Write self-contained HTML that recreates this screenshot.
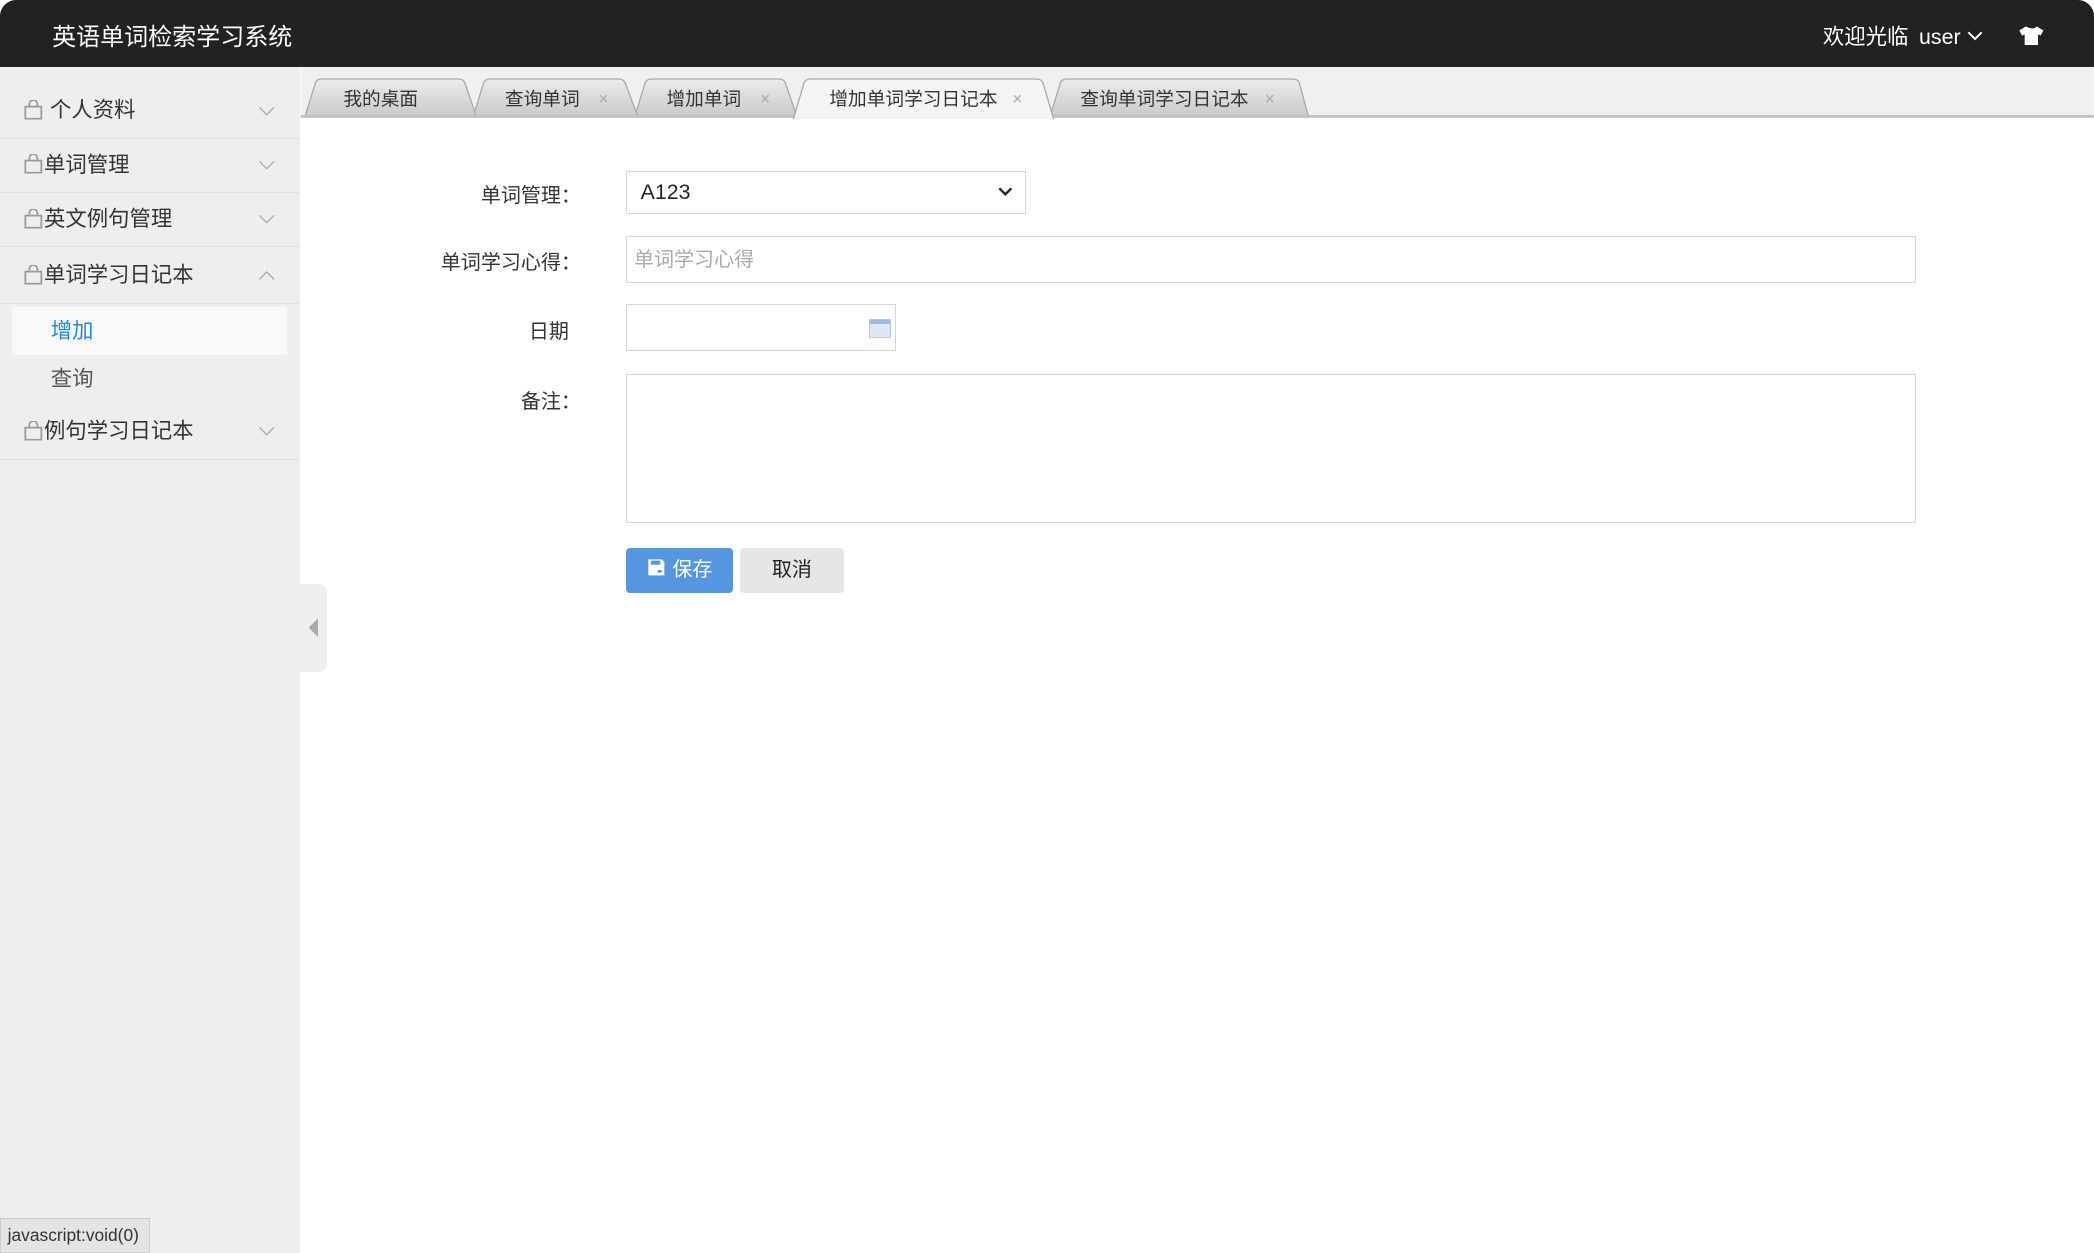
<!DOCTYPE html>
<html><head><meta charset="utf-8"><style>
html{zoom:1.33546}
body{margin:0;width:1568px;height:938px;overflow:hidden;background:#fff;font-family:"Liberation Sans","Noto Sans CJK SC",sans-serif;position:relative;color:#333}
.hd{position:absolute;left:0;top:0;width:1568px;height:50px;background:#222;border-radius:12px 12px 0 0}
.logo{position:absolute;left:39px;top:13px;color:#fff;font-size:18px}
.wel{position:absolute;left:1365px;top:15px;color:#fff;font-size:16px}
.wel b{font-weight:normal;margin-left:8px}
.side{position:absolute;left:0;top:50px;width:225px;height:888px;background:#eee;padding-top:13px;box-sizing:border-box}
.mi{height:40px;border-bottom:1px solid #e2e2e2;position:relative;font-size:16px;line-height:40px;padding-left:18px;color:#333}
.mi svg.l{vertical-align:-2px;margin-right:1px}
.mi .ar{position:absolute;right:19px;top:50%;margin-top:-4px}
.sub{height:36px;line-height:36px;font-size:16px;padding-left:38px}
.tabs{position:absolute;left:0;top:50px;width:1568px;height:40px}
.tt{font-size:14px;fill:#333;font-family:"Liberation Sans","Noto Sans CJK SC",sans-serif}
.tx{font-size:13px;fill:#aaa}
.lbl{position:absolute;width:200px;left:235px;text-align:right;font-size:15px;color:#333}
.box{position:absolute;border:1px solid #d6d6d6;box-sizing:border-box;background:#fff}
.btn{position:absolute;top:410px;height:34px;border-radius:3px;font-size:15px;line-height:34px;text-align:center}
</style></head><body>
<div class="hd"><div class="logo">英语单词检索学习系统</div>
<div class="wel">欢迎光临<b>user</b> <svg width="12" height="8" viewBox="0 0 12 8" style="vertical-align:2px"><path d="M1 1l5 5 5-5" stroke="#fff" stroke-width="1.5" fill="none"/></svg>
<svg width="20" height="16" viewBox="0 0 20 16" style="margin-left:22px;vertical-align:-2px"><path d="M6 1L1 4l2 4 2-1v8h10V7l2 1 2-4-5-3c-1 2-5 2-8 0z" fill="#fff"/></svg></div></div>
<div class="side">
<div class="mi"><svg class="l" width="14" height="15" viewBox="0 0 14 15"><path d="M1 5h12v9H1zM4 5V3a3 3 0 0 1 6 0v2" stroke="#999" fill="none" stroke-width="1.3"/></svg> 个人资料<svg class="ar" width="13" height="8"><path d="M1 1l5.5 5.5L12 1" stroke="#aaa" fill="none"/></svg></div>
<div class="mi"><svg class="l" width="14" height="15" viewBox="0 0 14 15"><path d="M1 5h12v9H1zM4 5V3a3 3 0 0 1 6 0v2" stroke="#999" fill="none" stroke-width="1.3"/></svg>单词管理<svg class="ar" width="13" height="8"><path d="M1 1l5.5 5.5L12 1" stroke="#aaa" fill="none"/></svg></div>
<div class="mi"><svg class="l" width="14" height="15" viewBox="0 0 14 15"><path d="M1 5h12v9H1zM4 5V3a3 3 0 0 1 6 0v2" stroke="#999" fill="none" stroke-width="1.3"/></svg>英文例句管理<svg class="ar" width="13" height="8"><path d="M1 1l5.5 5.5L12 1" stroke="#aaa" fill="none"/></svg></div>
<div class="mi" style="height:42px;line-height:42px"><svg class="l" width="14" height="15" viewBox="0 0 14 15"><path d="M1 5h12v9H1zM4 5V3a3 3 0 0 1 6 0v2" stroke="#999" fill="none" stroke-width="1.3"/></svg>单词学习日记本<svg class="ar" width="13" height="8"><path d="M1 7l5.5-5.5L12 7" stroke="#aaa" fill="none"/></svg></div>
<div style="height:2px"></div>
<div class="sub" style="background:#f9f9f9;margin:0 10px 0 9px;padding-left:29px;color:#1e88e5">增加</div>
<div class="sub" style="color:#555">查询</div>
<div class="mi" style="height:42px;line-height:42px"><svg class="l" width="14" height="15" viewBox="0 0 14 15"><path d="M1 5h12v9H1zM4 5V3a3 3 0 0 1 6 0v2" stroke="#999" fill="none" stroke-width="1.3"/></svg>例句学习日记本<svg class="ar" width="13" height="8"><path d="M1 1l5.5 5.5L12 1" stroke="#aaa" fill="none"/></svg></div>
</div>
<div style="position:absolute;left:0;top:912px;width:112px;height:26px;background:#e4e4e4;border:1px solid #ccc;box-sizing:border-box;font-size:13px;line-height:24px;padding-left:5px">javascript:void(0)</div>
<div style="position:absolute;left:225px;top:437px;width:20px;height:66px;background:#efefef;border-radius:0 6px 6px 0"></div>
<svg style="position:absolute;left:229px;top:462px" width="10" height="16"><path d="M9 1L2 8l7 7z" fill="#aaa"/></svg>
<svg class="tabs" width="1568" height="40" viewBox="0 50 1568 40">
<defs><linearGradient id="g" x1="0" y1="0" x2="0" y2="1"><stop offset="0" stop-color="#ececec"/><stop offset="1" stop-color="#c8c8c8"/></linearGradient></defs>
<rect x="225" y="50" width="1343" height="38" fill="#f0f0f0"/>
<path d="M786 88L794 62Q795 59 799 59H968Q972 59 973 62L980 88" fill="url(#g)" stroke="#aaa"/>
<path d="M475 88L483 62Q484 59 488 59H583Q587 59 588 62L597 88" fill="url(#g)" stroke="#aaa"/>
<path d="M354 88L362 62Q363 59 367 59H463Q467 59 468 62L478 88" fill="url(#g)" stroke="#aaa"/>
<path d="M228 88L236 62Q237 59 241 59H343Q347 59 348 62L357 88" fill="url(#g)" stroke="#aaa"/>
<rect x="225" y="86" width="1343" height="2" fill="#c0c0c0"/>
<path d="M594 89L602 62Q603 59 607 59H776Q780 59 781 62L789 89" fill="#f4f4f4" stroke="#aaa"/>
<text class="tt" x="257" y="79">我的桌面</text>
<text class="tt" x="378" y="79">查询单词</text><text class="tx" x="448" y="78">×</text>
<text class="tt" x="499" y="79">增加单词</text><text class="tx" x="569" y="78">×</text>
<text class="tt" x="621" y="79">增加单词学习日记本</text><text class="tx" x="758" y="78">×</text>
<text class="tt" x="809" y="79">查询单词学习日记本</text><text class="tx" x="947" y="78">×</text>
</svg>
<div class="lbl" style="top:134px">单词管理：</div>
<div class="box" style="left:469px;top:128px;width:299px;height:32px;font-size:16px;line-height:30px;padding-left:10px;color:#222">A123<svg style="position:absolute;right:9px;top:11px" width="11" height="8"><path d="M1 1l4.5 4.5L10 1" stroke="#222" stroke-width="1.8" fill="none"/></svg></div>
<div class="lbl" style="top:184px">单词学习心得：</div>
<div class="box" style="left:469px;top:177px;width:966px;height:35px;font-size:15px;line-height:35px;padding-left:5px;color:#aaa">单词学习心得</div>
<div class="lbl" style="top:236px;left:226px">日期</div>
<div class="box" style="left:469px;top:228px;width:202px;height:35px"><div style="position:absolute;right:3px;top:10px;width:15px;height:13px;background:linear-gradient(#9bb8e8 0 3px,#dfe6f4 3px);border:1px solid #b8c8e2"></div></div>
<div class="lbl" style="top:288px">备注：</div>
<div class="box" style="left:469px;top:280px;width:966px;height:112px"></div>
<div class="btn" style="left:469px;width:80px;background:#5596e0;color:#fff"><svg width="14" height="14" viewBox="0 0 14 14" style="vertical-align:-1px;margin-right:5px"><path d="M1 1h10l2 2v10H1z" fill="#fff"/><rect x="3" y="2" width="7" height="3" fill="#5596e0"/><rect x="8" y="9" width="3" height="2" fill="#5596e0"/></svg>保存</div>
<div class="btn" style="left:554px;width:78px;background:#e6e6e6;color:#222">取消</div>
</body></html>
